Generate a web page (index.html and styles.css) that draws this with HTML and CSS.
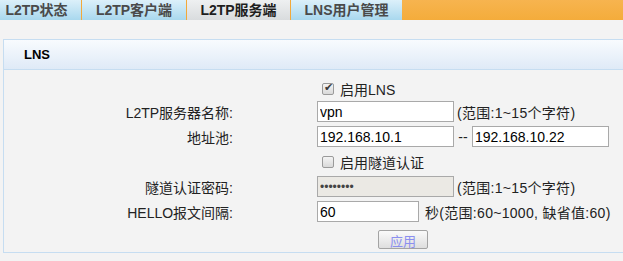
FILE: index.html
```html
<!DOCTYPE html>
<html lang="zh-CN">
<head>
    <meta charset="UTF-8">
    <title>L2TP服务端</title>
    <link rel="stylesheet" href="styles.css">
</head>
<body>
    <div class="tabs">
        <div class="tab tab-first">L2TP状态</div>
        <div class="tab tab-client">L2TP客户端</div>
        <div class="tab tab-server active">L2TP服务端</div>
        <div class="tab tab-users">LNS用户管理</div>
        <div class="tab-fill"></div>
    </div>

    <div class="panel">
        <div class="panel-head">LNS</div>
        <div class="panel-body">
            <div class="row row-first">
                <div class="label"></div>
                <label class="check"><input type="checkbox" checked> 启用LNS</label>
            </div>
            <div class="row">
                <div class="label">L2TP服务器名称:</div>
                <div class="ctrl">
                    <input class="field" type="text" value="vpn">
                    <span class="hint">(范围:1~15个字符)</span>
                </div>
            </div>
            <div class="row">
                <div class="label">地址池:</div>
                <div class="ctrl">
                    <input class="field" type="text" value="192.168.10.1">
                    <span class="dash">--</span>
                    <input class="field" type="text" value="192.168.10.22">
                </div>
            </div>
            <div class="row">
                <div class="label"></div>
                <label class="check"><input type="checkbox"> 启用隧道认证</label>
            </div>
            <div class="row">
                <div class="label">隧道认证密码:</div>
                <div class="ctrl">
                    <input class="field field-pass" type="text" value="••••••••" disabled>
                    <span class="hint">(范围:1~15个字符)</span>
                </div>
            </div>
            <div class="row">
                <div class="label">HELLO报文间隔:</div>
                <div class="ctrl">
                    <input class="field field-short" type="text" value="60">
                    <span class="hint hint-wide">秒(范围:60~1000, 缺省值:60)</span>
                </div>
            </div>
            <div class="row row-btn">
                <div class="label"></div>
                <div class="ctrl">
                    <button class="btn">应用</button>
                </div>
            </div>
        </div>
    </div>
</body>
</html>
```

FILE: styles.css
```css
body {
    margin: 0;
    background-color: #f3f3f3;
    font-family: "Liberation Sans", "Noto Sans CJK SC", sans-serif;
    font-size: 14px;
    color: #222;
}

.tabs {
    display: flex;
    height: 20px;
}

.tab {
    box-sizing: border-box;
    height: 20px;
    line-height: 20px;
    text-align: center;
    font-size: 14px;
    font-weight: bold;
    color: #4a4a4a;
    background: linear-gradient(#dcf0fa, #a9d8ee);
    border-right: 1px solid #f2a93b;
}

.tab-first {
    width: 82px;
    padding-right: 8px;
}

.tab-client {
    width: 105px;
}

.tab-server {
    width: 104px;
}

.tab-users {
    width: 111px;
    border-right: none;
}

.tab.active {
    color: #1e1e1e;
    background: linear-gradient(#eef0f1, #d9dcde);
}

.tab-fill {
    flex: 1;
    background: linear-gradient(#f7b44f, #f4ac3b);
}

.panel {
    margin: 19px 0 0 3px;
    border: 1px solid #c6ddf1;
    border-right: none;
}

.panel-head {
    height: 29px;
    line-height: 29px;
    padding-left: 20px;
    font-weight: bold;
    font-size: 13px;
    color: #000;
    background: linear-gradient(#f8fbfe, #dfeaf7);
    border-bottom: 1px solid #c6ddf1;
}

.panel-body {
    padding-top: 8px;
}

.row {
    display: grid;
    grid-template-columns: 229px 1fr;
    column-gap: 84px;
    align-items: center;
    height: 25px;
}

.row-first {
    height: 21px;
}

.row-btn {
    height: 22px;
    padding-top: 6px;
    align-items: start;
}

.label {
    text-align: right;
}

.ctrl {
    display: flex;
    align-items: center;
    white-space: nowrap;
}

.check {
    display: flex;
    align-items: center;
    gap: 6px;
    padding-left: 5px;
}

.check input {
    appearance: none;
    position: relative;
    box-sizing: border-box;
    margin: 0;
    width: 12px;
    height: 12px;
    border: 1px solid #9a9a9a;
    border-radius: 2px;
    background: linear-gradient(#f4f4f4, #d9d9d9);
}

.check input:checked::after {
    content: "✔";
    position: absolute;
    left: 1px;
    top: -3px;
    font-size: 11px;
    color: #3a3a3a;
}

.field {
    box-sizing: border-box;
    width: 137px;
    height: 21px;
    padding: 1px 2px;
    border: 1px solid #a9a9a9;
    background-color: #fff;
    font-family: "Liberation Sans", sans-serif;
    font-size: 14px;
    color: #000;
}

.field-short {
    width: 102px;
}

.field-pass {
    background-color: #ebe9e4;
    color: #444;
    font-size: 12px;
}

.hint {
    margin-left: 3px;
    letter-spacing: 0.3px;
}

.hint-wide {
    margin-left: 6px;
}

.dash {
    width: 18px;
    text-align: center;
    font-size: 14px;
}

.btn {
    margin-left: 61px;
    width: 50px;
    height: 19px;
    padding: 0;
    border: 1px solid #a3a3a3;
    border-radius: 2px;
    background: linear-gradient(#fafafa, #dedede);
    font-family: "Liberation Sans", "Noto Sans CJK SC", sans-serif;
    font-size: 13px;
    color: #8b8ff0;
}
```
